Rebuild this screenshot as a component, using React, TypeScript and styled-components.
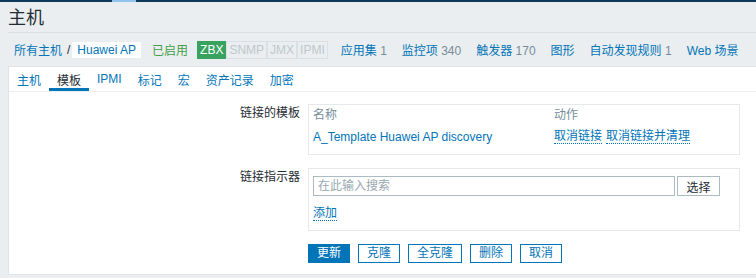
import { createGlobalStyle, styled } from 'styled-components';

const GlobalStyle = createGlobalStyle`
  body {
    margin: 0;
    background: #ebeef0;
    font-family: "Liberation Sans", Arial, "Noto Sans CJK SC", sans-serif;
    font-size: 12px;
    color: #1f2c33;
  }
`;

const interfaces = [
  { name: 'ZBX', active: true },
  { name: 'SNMP', active: false },
  { name: 'JMX', active: false },
  { name: 'IPMI', active: false },
];

const navLinks = [
  { label: '应用集', count: '1' },
  { label: '监控项', count: '340' },
  { label: '触发器', count: '170' },
  { label: '图形' },
  { label: '自动发现规则', count: '1' },
  { label: 'Web 场景' },
];

const tabs = ['主机', '模板', 'IPMI', '标记', '宏', '资产记录', '加密'];

const actions = ['更新', '克隆', '全克隆', '删除', '取消'];

const App = () => {
  return (
    <>
      <GlobalStyle />
      <TopBar>
        <TopMarker />
      </TopBar>
      <Header>
        <Title>主机</Title>
        <Nav>
          <Crumbs>
            <Link>所有主机</Link>
            <Separator>/</Separator>
            <CurrentHost>Huawei AP</CurrentHost>
          </Crumbs>
          <Status>已启用</Status>
          <Badges>
            {interfaces.map((i) => (
              <Badge key={i.name} $active={i.active}>
                {i.name}
              </Badge>
            ))}
          </Badges>
          <NavLinks>
            {navLinks.map((n) => (
              <NavItem key={n.label}>
                <Link>{n.label}</Link>
                {n.count && <Count> {n.count}</Count>}
              </NavItem>
            ))}
          </NavLinks>
        </Nav>
      </Header>
      <Panel>
        <TabList>
          {tabs.map((t) => (
            <Tab key={t} $active={t === '模板'}>
              {t}
            </Tab>
          ))}
        </TabList>
        <Form>
          <Label>链接的模板</Label>
          <Box $pad="0 0 6px">
            <Table>
              <thead>
                <tr>
                  <Th>名称</Th>
                  <Th>动作</Th>
                </tr>
              </thead>
              <tbody>
                <tr>
                  <Td>
                    <Link>A_Template Huawei AP discovery</Link>
                  </Td>
                  <Td>
                    <Actions>
                      <DottedLink>取消链接</DottedLink>
                      <DottedLink>取消链接并清理</DottedLink>
                    </Actions>
                  </Td>
                </tr>
              </tbody>
            </Table>
          </Box>

          <Label>链接指示器</Label>
          <Box $pad="7px 3px 10px">
            <SearchRow>
              <SearchInput placeholder="在此输入搜索" />
              <SelectButton type="button">选择</SelectButton>
            </SearchRow>
            <AddRow>
              <DottedLink>添加</DottedLink>
            </AddRow>
          </Box>

          <Buttons>
            {actions.map((a, i) => (
              <Button key={a} type="button" $primary={i === 0}>
                {a}
              </Button>
            ))}
          </Buttons>
        </Form>
      </Panel>
    </>
  );
};

export default App;

const TopBar = styled.div`
  display: flex;
  height: 2px;
  background: #0d3a5c;
`;

const TopMarker = styled.span`
  width: 24px;
  margin-left: 112px;
  background: #8ec3ea;
`;

const Header = styled.header`
  margin-left: 8px;
`;

const Title = styled.h1`
  margin: 0;
  padding-top: 2px;
  height: 28px;
  line-height: 28px;
  font-size: 18px;
  font-weight: normal;
  color: #1f2c33;
  border-bottom: 1px solid #d9dee2;
`;

const Nav = styled.nav`
  display: flex;
  align-items: center;
  height: 33px;
  padding-left: 6px;
`;

const Crumbs = styled.div`
  display: flex;
  align-items: center;
`;

const Link = styled.span`
  color: #0275b8;
  cursor: pointer;
`;

const Separator = styled.span`
  padding: 0 2px 0 5px;
  color: #1f2c33;
`;

const CurrentHost = styled.span`
  height: 16px;
  line-height: 16px;
  padding: 0 5px;
  background: #fff;
  color: #0275b8;
`;

const Status = styled.span`
  margin-left: 11px;
  color: #429e47;
`;

const Badges = styled.div`
  display: flex;
  margin-left: 9px;
`;

const Badge = styled.span<{ $active?: boolean }>`
  height: 16px;
  line-height: 16px;
  padding: 0 2px;
  border: 1px solid ${(p) => (p.$active ? '#37a35f' : '#dbe0e4')};
  background: ${(p) => (p.$active ? '#37a35f' : '#ebeef0')};
  color: ${(p) => (p.$active ? '#fff' : '#bdc8cd')};
`;

const NavLinks = styled.div`
  display: flex;
  gap: 15px;
  margin-left: 13px;
`;

const NavItem = styled.span`
  white-space: pre;
`;

const Count = styled.span`
  color: #768d99;
`;

const Panel = styled.main`
  margin-left: 8px;
  background: #fff;
  border: 1px solid #dfe4e7;
  border-right: 0;
`;

const TabList = styled.ul`
  display: flex;
  height: 24px;
  margin: 0;
  padding: 0;
  list-style: none;
  border-bottom: 1px solid #ebeef0;
`;

const Tab = styled.li<{ $active?: boolean }>`
  display: flex;
  align-items: center;
  padding: 0 8px;
  color: ${(p) => (p.$active ? '#1f2c33' : '#0275b8')};
  box-shadow: ${(p) => (p.$active ? 'inset 0 -3px 0 #0275b8' : 'none')};
`;

const Form = styled.form`
  display: grid;
  grid-template-columns: 291px 432px;
  column-gap: 8px;
  row-gap: 13px;
  padding: 12px 0 11px;
`;

const Label = styled.label`
  padding-top: 2px;
  line-height: 14px;
  text-align: right;
  color: #1f2c33;
`;

const Box = styled.div<{ $pad: string }>`
  padding: ${(p) => p.$pad};
  border: 1px solid #e6e9eb;
`;

const Table = styled.table`
  width: 100%;
  border-collapse: collapse;
`;

const Th = styled.th`
  padding: 3px 4px;
  line-height: 14px;
  font-weight: normal;
  text-align: left;
  color: #768d99;

  &:first-child {
    width: 233px;
  }
`;

const Td = styled.td`
  padding: 4px;
  line-height: 14px;
`;

const Actions = styled.div`
  display: flex;
  gap: 4px;
`;

const DottedLink = styled.span`
  color: #0275b8;
  border-bottom: 1px dotted #0275b8;
  cursor: pointer;
`;

const SearchRow = styled.div`
  display: flex;
  gap: 2px;
  padding-left: 1px;
`;

const SearchInput = styled.input`
  box-sizing: border-box;
  width: 362px;
  height: 20px;
  padding: 0 4px;
  border: 1px solid #acbbc2;
  font: inherit;
  color: #1f2c33;

  &::placeholder {
    color: #9aa8b0;
  }
`;

const SelectButton = styled.button`
  box-sizing: border-box;
  width: 43px;
  height: 20px;
  padding: 0;
  border: 1px solid #acbbc2;
  background: #fff;
  font: inherit;
  color: #1f2c33;
`;

const AddRow = styled.div`
  margin-top: 10px;
  padding-left: 1px;
  line-height: 14px;
`;

const Buttons = styled.div`
  grid-column: 2;
  display: flex;
  gap: 8px;
`;

const Button = styled.button<{ $primary?: boolean }>`
  height: 19px;
  padding: 0 8px;
  border: 1px solid #0275b8;
  background: ${(p) => (p.$primary ? '#0275b8' : '#fff')};
  color: ${(p) => (p.$primary ? '#fff' : '#0275b8')};
  font: inherit;
  line-height: 17px;
`;
